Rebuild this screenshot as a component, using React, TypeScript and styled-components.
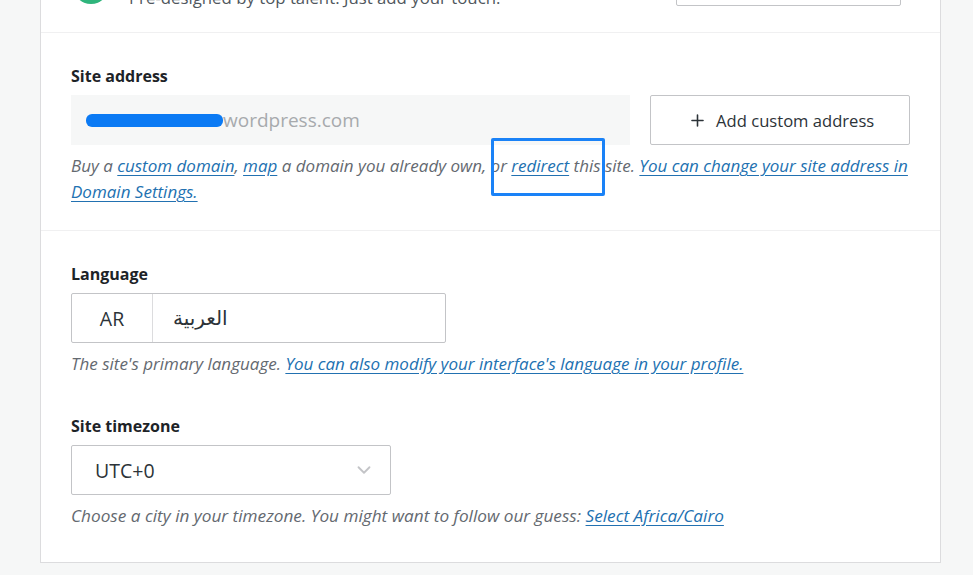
import React from "react";
import styled, { createGlobalStyle } from "styled-components";
import { ChevronDown, Plus } from "lucide-react";

const GlobalStyle = createGlobalStyle`
  html, body {
    margin: 0;
    padding: 0;
    background: #f6f7f7;
    overflow: hidden;
  }
  body {
    font-family: "Open Sans", "Noto Sans", "DejaVu Sans", sans-serif;
    color: #2c3338;
  }
  * {
    box-sizing: border-box;
  }
`;

export default function App() {
  return (
    <>
      <GlobalStyle />
      <Page>
        <Card>
          {/* 테마 안내 (위쪽이 잘려 보임) */}
          <Section $top>
            <ThemeRow>
              <ThemeIcon />
              <ThemeText>
                <ThemeTitle>Premium themes</ThemeTitle>
                <ThemeSub>
                  Pre-designed by top talent. Just add your touch.
                </ThemeSub>
              </ThemeText>
              <GhostButton>Browse themes</GhostButton>
            </ThemeRow>
          </Section>

          {/* 사이트 주소 */}
          <Section>
            <Label>Site address</Label>
            <AddressRow>
              <AddressField>
                <Redacted />
                wordpress.com
              </AddressField>
              <AddButton>
                <Plus size={19} strokeWidth={2} />
                Add custom address
              </AddButton>
            </AddressRow>
            <Help>
              Buy a <Link href="#">custom domain</Link>,{" "}
              <Link href="#">map</Link> a domain you already own, or{" "}
              <Link href="#">redirect</Link> this site.{" "}
              <Link href="#">
                You can change your site address in Domain Settings.
              </Link>
            </Help>
            <Highlight />
          </Section>

          {/* 언어 / 시간대 */}
          <Section $last>
            <Label>Language</Label>
            <LanguageBox>
              <LangCode>AR</LangCode>
              <LangName lang="ar">العربية</LangName>
            </LanguageBox>
            <Help>
              The site's primary language.{" "}
              <Link href="#">
                You can also modify your interface's language in your profile.
              </Link>
            </Help>

            <Field>
              <Label>Site timezone</Label>
              <Select>
                UTC+0
                <ChevronDown size={22} strokeWidth={2} color="#c3c4c7" />
              </Select>
              <Help $wide>
                Choose a city in your timezone. You might want to follow our
                guess: <Link href="#">Select Africa/Cairo</Link>
              </Help>
            </Field>
          </Section>
        </Card>
      </Page>
    </>
  );
}

const Page = styled.div`
  display: flow-root;
  width: 973px;
  min-height: 100vh;
  padding: 0 33px 0 40px;
  background: #f6f7f7;
`;

const Card = styled.div`
  margin-top: -62px;
  width: 901px;
  background: #fff;
  border: 1px solid #dcdcde;
  border-top: none;
`;

const Section = styled.div<{ $top?: boolean; $last?: boolean }>`
  position: relative;
  padding: ${(p) =>
    p.$top ? "24px 30px 22px" : p.$last ? "31px 30px 33px" : "31px 30px 25px"};
  border-bottom: ${(p) => (p.$last ? "none" : "1px solid #f0f0f1")};
`;

const ThemeRow = styled.div`
  display: flex;
  align-items: center;
  height: 48px;
  padding-left: 2px;
`;

const ThemeIcon = styled.div`
  width: 36px;
  height: 36px;
  border-radius: 50%;
  background: #2fb57c;
  flex-shrink: 0;
`;

const ThemeText = styled.div`
  display: flex;
  flex-direction: column;
  margin-left: 20px;
  flex: 1;
`;

const ThemeTitle = styled.div`
  font-size: 15px;
  line-height: 24px;
  font-weight: 700;
  color: #1d2327;
`;

const ThemeSub = styled.div`
  font-size: 16.8px;
  line-height: 24px;
  color: #50575e;
`;

const GhostButton = styled.button`
  width: 225px;
  height: 40px;
  margin-right: 9px;
  background: #fff;
  border: 1px solid #c3c4c7;
  border-radius: 2px;
  font: inherit;
  font-size: 15px;
  color: #2c3338;
`;

const Label = styled.div`
  font-size: 16px;
  line-height: 24px;
  font-weight: 700;
  color: #1d2327;
  margin-bottom: 7px;
`;

const AddressRow = styled.div`
  display: flex;
  gap: 20px;
`;

const AddressField = styled.div`
  width: 560px;
  height: 50px;
  display: flex;
  align-items: center;
  padding-left: 15px;
  background: #f6f7f7;
  font-size: 19px;
  color: #a7aaad;
`;

const Redacted = styled.span`
  display: inline-block;
  width: 137px;
  height: 13px;
  margin-top: 1px;
  border-radius: 6px;
  background: #0b7af4;
`;

const AddButton = styled.button`
  width: 260px;
  height: 50px;
  display: flex;
  align-items: center;
  justify-content: center;
  gap: 9px;
  background: #fff;
  border: 1px solid #c3c4c7;
  border-radius: 2px;
  font: inherit;
  font-size: 16.6px;
  color: #2c3338;
  padding: 0 0 0 2px;
`;

const Help = styled.p<{ $wide?: boolean }>`
  margin: 8px 0 0;
  font-size: ${(p) => (p.$wide ? "17.2px" : "17px")};
  line-height: 26px;
  font-style: italic;
  color: #646970;
`;

const Link = styled.a`
  color: #2271b1;
  text-decoration: underline;
  text-underline-offset: 3px;
`;

const Highlight = styled.div`
  position: absolute;
  left: 450px;
  top: 105px;
  width: 114px;
  height: 58px;
  border: 3px solid #1a82f7;
  border-radius: 2px;
  pointer-events: none;
`;

const LanguageBox = styled.div`
  width: 375px;
  height: 50px;
  display: flex;
  border: 1px solid #c3c4c7;
  border-radius: 2px;
  font-size: 19.5px;
  color: #2c3338;
`;

const LangCode = styled.div`
  width: 81px;
  display: flex;
  align-items: center;
  justify-content: center;
  border-right: 1px solid #dcdcde;
`;

const LangName = styled.div`
  display: flex;
  align-items: center;
  padding-left: 20px;
  font-family: "DejaVu Sans", "Noto Sans", sans-serif;
  font-size: 20px;
`;

const Field = styled.div`
  margin-top: 37px;
`;

const Select = styled.div`
  width: 320px;
  height: 50px;
  display: flex;
  align-items: center;
  justify-content: space-between;
  padding: 0 15px 0 23px;
  border: 1px solid #c3c4c7;
  border-radius: 2px;
  font-size: 19.5px;
  color: #2c3338;
`;
